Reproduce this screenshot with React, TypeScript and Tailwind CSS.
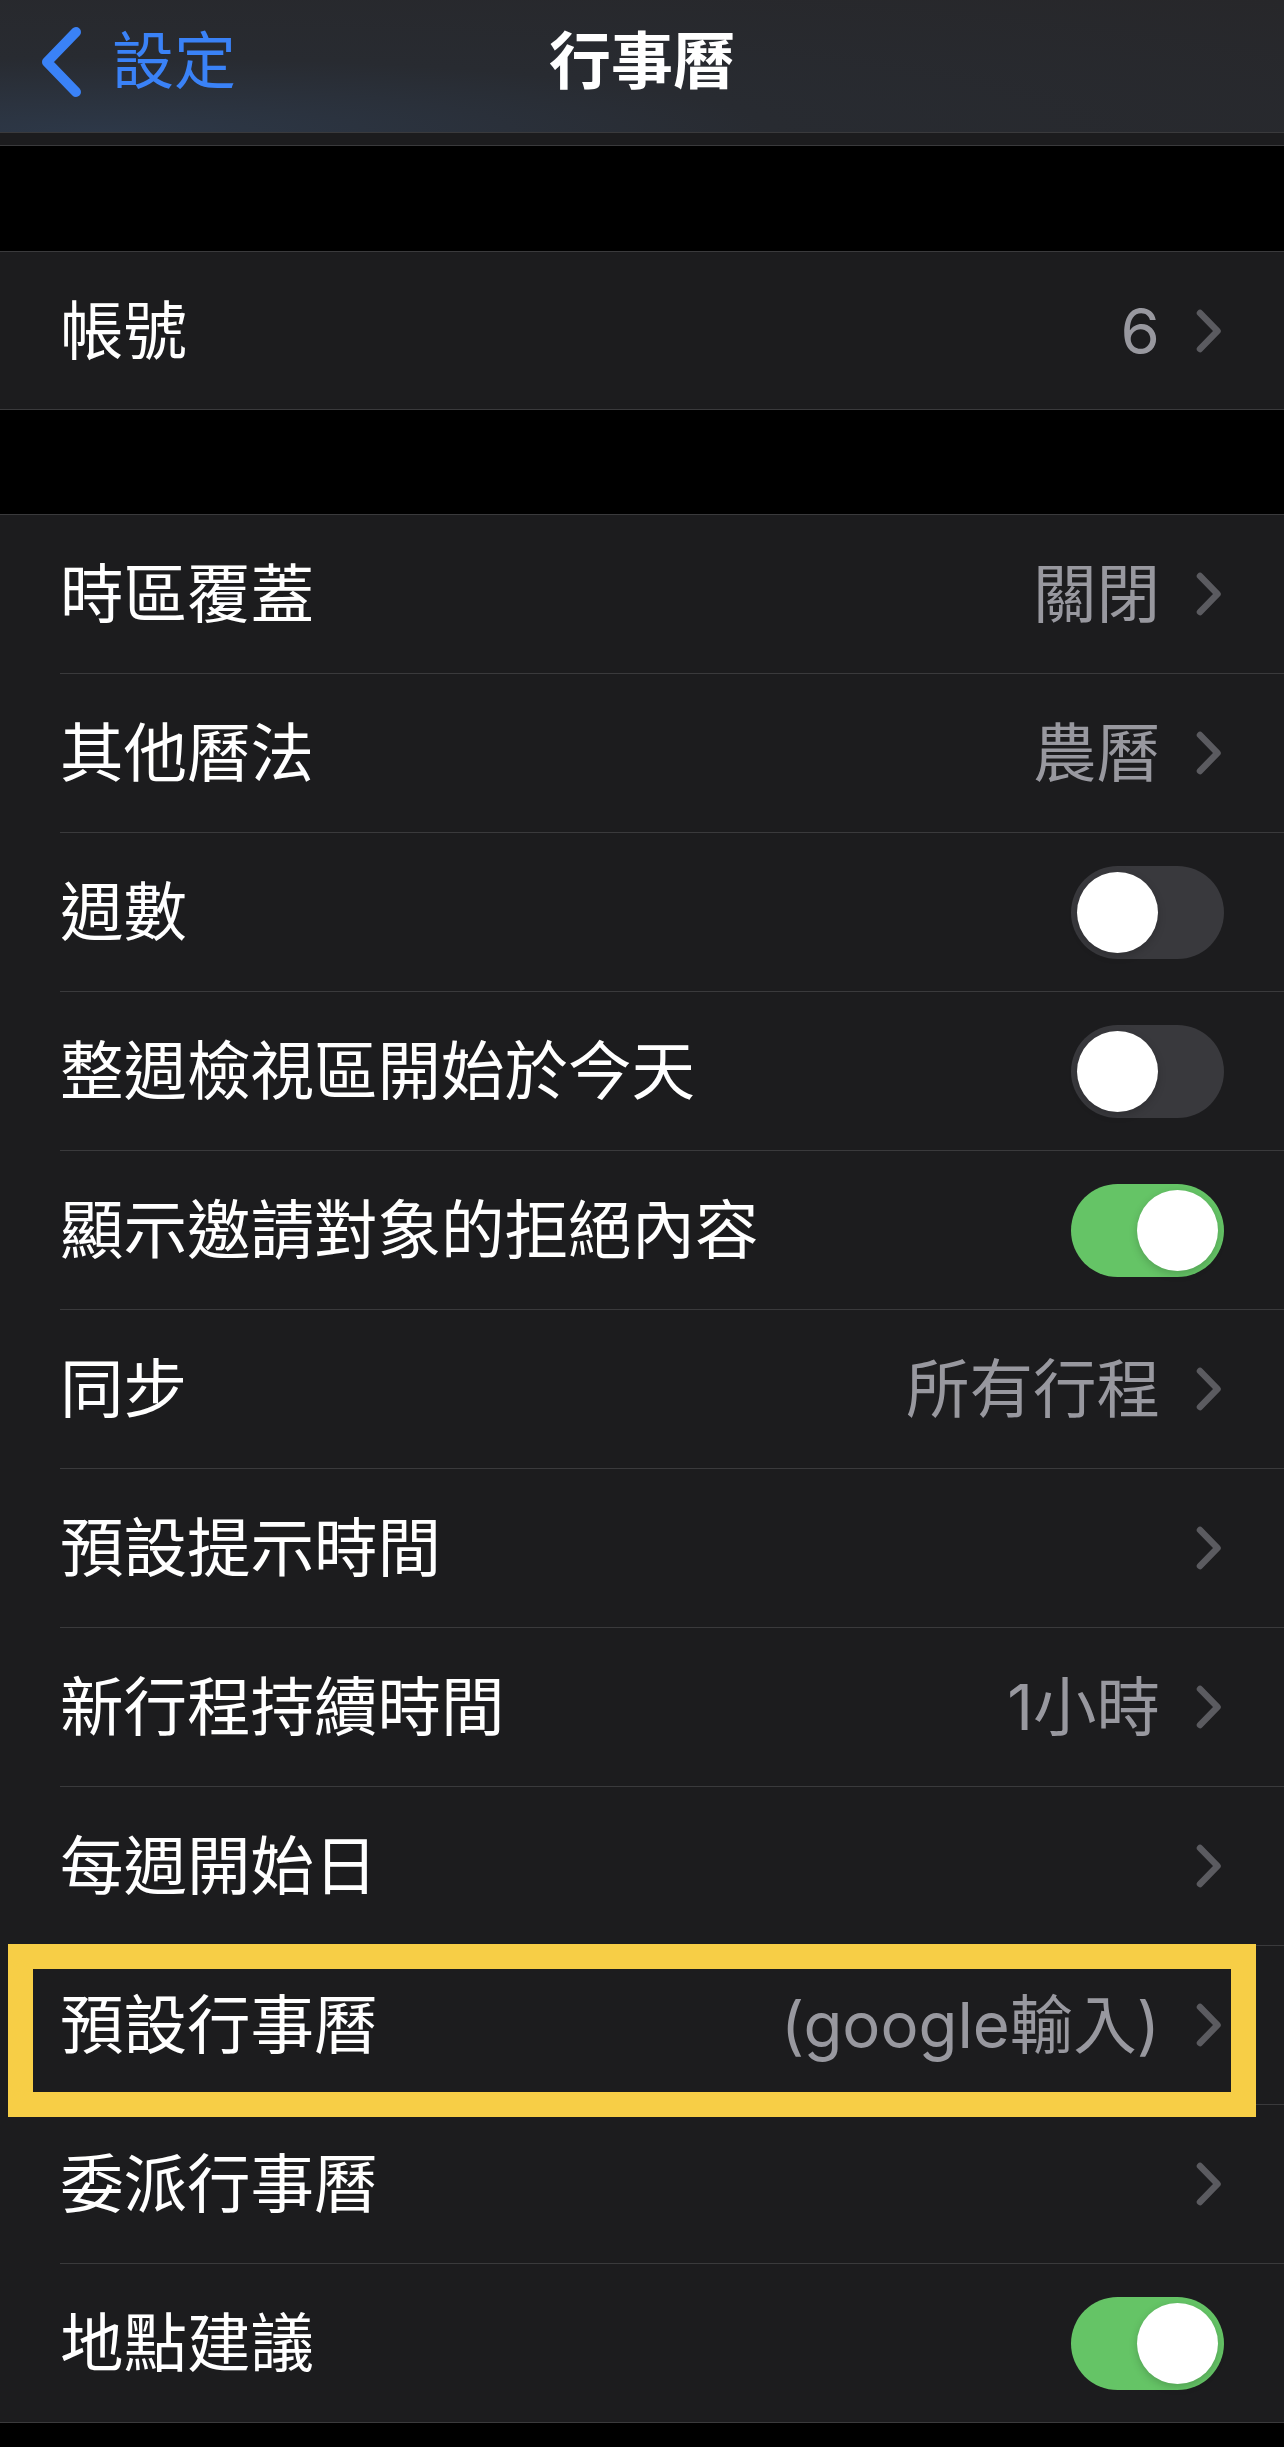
import { ReactNode } from 'react';

type Row = {
  label: string;
  value?: string;
  toggle?: boolean;
  highlight?: boolean;
};

const accountRows: Row[] = [{ label: '帳號', value: '6' }];

const settingRows: Row[] = [
  { label: '時區覆蓋', value: '關閉' },
  { label: '其他曆法', value: '農曆' },
  { label: '週數', toggle: false },
  { label: '整週檢視區開始於今天', toggle: false },
  { label: '顯示邀請對象的拒絕內容', toggle: true },
  { label: '同步', value: '所有行程' },
  { label: '預設提示時間' },
  { label: '新行程持續時間', value: '1小時' },
  { label: '每週開始日' },
  { label: '預設行事曆', value: '(google輸入)', highlight: true },
  { label: '委派行事曆' },
  { label: '地點建議', toggle: true },
];

const Chevron = () => (
  <svg width="26" height="44" viewBox="0 0 26 44" fill="none" className="shrink-0">
    <path d="M4 4 L21.5 22 L4 40" stroke="#5b5b60" strokeWidth={6.5} strokeLinecap="round" strokeLinejoin="round" />
  </svg>
);

const Toggle = ({ on }: { on: boolean }) => (
  <div
    className={`flex items-center w-[153px] h-[93px] rounded-full px-[6px] shrink-0 ${
      on ? 'bg-[#65c466] justify-end' : 'bg-[#39393d] justify-start'
    }`}
  >
    <div className="w-[81px] h-[81px] rounded-full bg-white shadow-[0_3px_8px_rgba(0,0,0,0.18)]" />
  </div>
);

// 黃色標註框，蓋在列上面
const Highlight = () => (
  <div className="absolute top-[-2px] left-[8px] w-[1248px] h-[173px] border-[25px] border-[#f7ce46] z-10 pointer-events-none" />
);

const SettingRow = ({ row, height }: { row: Row; height: string }) => {
  let right: ReactNode = null;
  if (row.toggle !== undefined) {
    right = <Toggle on={row.toggle} />;
  } else {
    right = (
      <div className="flex items-center gap-[36px]">
        {row.value && <span className="text-[#98989f] leading-none">{row.value}</span>}
        <Chevron />
      </div>
    );
  }
  return (
    <div className={`relative flex items-center justify-between ${height} pl-[60px] ${row.toggle !== undefined ? 'pr-[60px]' : 'pr-[62px]'}`}>
      <span className="text-white leading-none">{row.label}</span>
      {right}
      {row.highlight && <Highlight />}
    </div>
  );
};

const Group = ({ rows, rowHeight }: { rows: Row[]; rowHeight: string }) => (
  <div className="bg-[#1c1c1e] border-t border-[#3a3a3c]">
    {rows.map((row, i) => (
      <div key={row.label}>
        <SettingRow row={row} height={rowHeight} />
        <div className={`h-px bg-[#3a3a3c] ${i === rows.length - 1 ? '' : 'ml-[60px]'}`} />
      </div>
    ))}
  </div>
);

export default function App() {
  return (
    <div className="w-[1284px] min-h-[2447px] bg-black text-[63.5px] antialiased font-[family-name:Inter,'Noto_Sans_CJK_TC',sans-serif]">
      {/* 導覽列 */}
      <div className="grid grid-cols-[1fr_auto_1fr] items-center h-[132px] pb-[8px] text-[62px] bg-[radial-gradient(ellipse_at_8%_100%,#2d3848_0%,#282b31_40%,#27272a_100%)]">
        <div className="flex items-center">
          <svg width="50" height="80" viewBox="0 0 50 80" fill="none" className="ml-[36px]">
            <path d="M40 10 L11 40 L40 70" stroke="#3a82f7" strokeWidth={10} strokeLinecap="round" strokeLinejoin="round" />
          </svg>
          <span className="ml-[26px] text-[#3a82f7] leading-none">設定</span>
        </div>
        <span className="text-white font-semibold leading-none">行事曆</span>
        <div />
      </div>

      {/* 被導覽列遮住的上一列 */}
      <div className="h-[14px] bg-[#1c1c1e] border-t border-b border-[#3a3a3c]" />

      <div className="h-[105px]" />
      <Group rows={accountRows} rowHeight="h-[157px]" />

      <div className="h-[104px]" />
      <Group rows={settingRows} rowHeight="h-[158px]" />
    </div>
  );
}
